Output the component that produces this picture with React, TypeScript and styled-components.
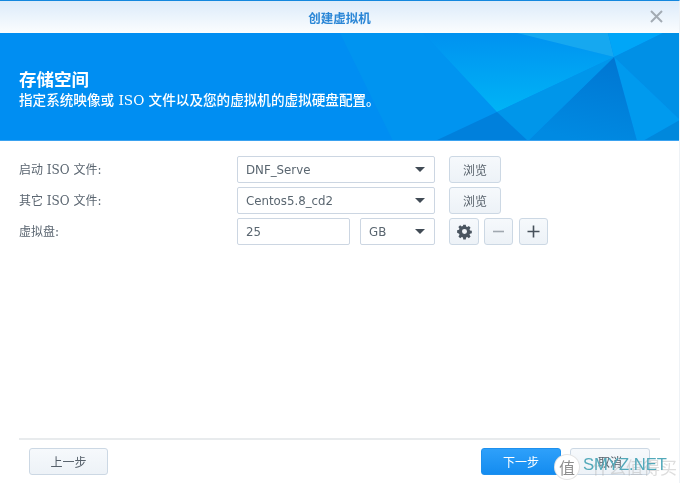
import React from "react";
import styled, { createGlobalStyle } from "styled-components";

const Global = createGlobalStyle`
  html, body { margin: 0; padding: 0; background: #fff; }
  body { font-family: "DejaVu Sans", "Noto Sans CJK SC", sans-serif; overflow: hidden; }
`;

const Dialog = styled.div`
  position: relative;
  width: 680px;
  height: 483px;
  box-sizing: border-box;
  border-top: 1px solid #1387de;
  border-right: 1px solid #eef2f6;
  background: #fff;
  display: flex;
  flex-direction: column;
  overflow: hidden;
  filter: blur(0.35px);
`;

const TitleBar = styled.div`
  height: 32px;
  flex: none;
  display: flex;
  align-items: center;
  justify-content: center;
  background: linear-gradient(#dcebfa, #fbfdfe);
  position: relative;
`;

const Title = styled.span`
  font: 700 12.5px "Noto Sans CJK SC", sans-serif;
  color: #2a86d6;
`;

const Close = styled.svg`
  position: absolute;
  right: 16px;
  top: 9px;
  width: 13px;
  height: 13px;
`;

const Banner = styled.header`
  position: relative;
  height: 108px;
  flex: none;
  box-sizing: border-box;
  border-bottom: 1px solid #3aa2f0;
  background: #008ef2;
  color: #fff;
  padding: 36px 19px 0;
  overflow: hidden;
`;

const BannerArt = styled.svg`
  position: absolute;
  left: 0;
  top: 0;
  width: 680px;
  height: 108px;
`;

const Heading = styled.h1`
  position: relative;
  margin: 0;
  font: 700 17.5px/20px "Noto Sans CJK SC", sans-serif;
`;

const Sub = styled.p`
  position: relative;
  margin: 3px 0 0;
  font: 500 13.6px/16px "DejaVu Serif", "Noto Sans CJK SC", serif;
  white-space: nowrap;
`;

const Form = styled.main`
  flex: 1;
  padding: 15px 19px 0;
  display: flex;
  flex-direction: column;
  gap: 4px;
`;

const Row = styled.div`
  display: flex;
  align-items: center;
  height: 27px;
`;

const Label = styled.label`
  width: 218px;
  flex: none;
  font: 12px/16px "DejaVu Serif", "Noto Sans CJK SC", serif;
  color: #5a6570;
  white-space: nowrap;
`;

const Field = styled.div<{ $w: number; $ml?: number }>`
  width: ${(p) => p.$w}px;
  margin-left: ${(p) => p.$ml ?? 0}px;
  height: 27px;
  box-sizing: border-box;
  flex: none;
  border: 1px solid #ccd6e2;
  border-radius: 2px;
  background: #fff;
  display: flex;
  align-items: center;
  justify-content: space-between;
  padding: 0 9px 0 8px;
  font-size: 11.8px;
  color: #5a6670;
`;

const Caret = styled.i`
  width: 0;
  height: 0;
  border-left: 5.5px solid transparent;
  border-right: 5.5px solid transparent;
  border-top: 5.5px solid #414b55;
`;

const Btn = styled.button<{ $w: number; $ml?: number; $primary?: boolean }>`
  width: ${(p) => p.$w}px;
  height: 27px;
  margin-left: ${(p) => p.$ml ?? 0}px;
  flex: none;
  box-sizing: border-box;
  padding: 0;
  border-radius: 3px;
  display: flex;
  align-items: center;
  justify-content: center;
  font: 12px "Noto Sans CJK SC", sans-serif;
  border: 1px solid ${(p) => (p.$primary ? "#1e90ee" : "#ccd8e4")};
  color: ${(p) => (p.$primary ? "#fff" : "#56606a")};
  background: ${(p) =>
    p.$primary ? "linear-gradient(#2ea0fa, #148cf0)" : "linear-gradient(#f6f9fc, #edf2f7)"};
`;

const Footer = styled.footer`
  flex: none;
  margin: 0 19px 8px 19px;
  padding: 8px 10px 0;
  border-top: 2px solid #e8ebed;
  height: 27px;
  display: flex;
  align-items: flex-start;
`;

const Spacer = styled.div`
  flex: 1;
`;

const Watermark = styled.div`
  position: absolute;
  left: 555px;
  top: 454px;
  width: 125px;
  height: 28px;
`;

const Badge = styled.span`
  position: absolute;
  left: 0;
  top: 0;
  width: 24px;
  height: 24px;
  border-radius: 50%;
  background: #fff;
  box-shadow: 0 0 0 1px #e4e4e4;
  color: #8e8e8e;
  font: 16px/24px "Noto Sans CJK SC", sans-serif;
  text-align: center;
`;

const Site = styled.span`
  position: absolute;
  left: 28px;
  top: 0;
  font: 16.6px/20px "Liberation Sans", sans-serif;
  color: #52a9ba;
`;

const Ghost = styled.span`
  position: absolute;
  left: 37px;
  top: 2px;
  font: 17px/20px "Noto Sans CJK SC", sans-serif;
  color: rgba(170, 170, 170, 0.4);
  white-space: nowrap;
`;

const art: [string, string][] = [
  ["340,0 393,108 436,108 497,79 423,0", "#0094f0"],
  ["423,0 517,0 614,24 497,79", "url(#glow)"],
  ["517,0 608,0 614,24", "#16a8f0"],
  ["608,0 663,0 614,24", "#00a6f8"],
  ["663,0 680,0 680,87 614,24", "#0090e6"],
  ["614,24 680,87 643,108 637,108", "#009aee"],
  ["614,24 637,108 528,108", "url(#deep)"],
  ["497,79 614,24 528,108", "#0096ea"],
  ["497,79 528,108 435,108", "#0080dc"],
  ["643,108 680,87 680,108", "#0088dc"],
];

export default function App() {
  return (
    <Dialog>
      <Global />
      <TitleBar>
        <Title>创建虚拟机</Title>
        <Close viewBox="0 0 13 13">
          <path d="M1 1 12 12M12 1 1 12" stroke="#a3abb3" strokeWidth="2" />
        </Close>
      </TitleBar>
      <Banner>
        <BannerArt viewBox="0 0 680 108">
          <defs>
            <linearGradient id="glow" x1="0.4" y1="0" x2="0.45" y2="1">
              <stop offset="0" stopColor="#0092f0" />
              <stop offset="1" stopColor="#00b4f6" />
            </linearGradient>
            <linearGradient id="deep" x1="0.8" y1="0" x2="0.5" y2="1">
              <stop offset="0" stopColor="#0076d2" />
              <stop offset="1" stopColor="#008ae2" />
            </linearGradient>
          </defs>
          {art.map(([points, fill]) => (
            <polygon key={points} points={points} fill={fill} />
          ))}
        </BannerArt>
        <Heading>存储空间</Heading>
        <Sub>指定系统映像或 ISO 文件以及您的虚拟机的虚拟硬盘配置。</Sub>
      </Banner>
      <Form>
        <Row>
          <Label>启动 ISO 文件:</Label>
          <Field $w={198}>DNF_Serve<Caret /></Field>
          <Btn $w={52} $ml={14}>浏览</Btn>
        </Row>
        <Row>
          <Label>其它 ISO 文件:</Label>
          <Field $w={198}>Centos5.8_cd2<Caret /></Field>
          <Btn $w={52} $ml={14}>浏览</Btn>
        </Row>
        <Row>
          <Label>虚拟盘:</Label>
          <Field $w={113}>25</Field>
          <Field $w={75} $ml={10}>GB<Caret /></Field>
          <Btn $w={30} $ml={14} aria-label="设置">
            <svg width="17" height="17" viewBox="0 0 18 18">
              <path
                fillRule="evenodd"
                fill="#4a5560"
                d="M7.5 1h3l.4 2.2 1.4.6 1.9-1.3 2.1 2.1-1.3 1.9.6 1.4 2.2.4v3l-2.2.4-.6 1.4 1.3 1.9-2.1 2.1-1.9-1.3-1.4.6-.4 2.2h-3l-.4-2.2-1.4-.6-1.9 1.3-2.1-2.1 1.3-1.9-.6-1.4L.1 10.5v-3l2.2-.4.6-1.4L1.6 3.8l2.1-2.1 1.9 1.3 1.4-.6zM9 6a3 3 0 1 0 0 6 3 3 0 0 0 0-6z"
                transform="translate(1.1 1) scale(.88)"
              />
            </svg>
          </Btn>
          <Btn $w={29} $ml={5} aria-label="删除">
            <svg width="13" height="13" viewBox="0 0 13 13">
              <path d="M1 6.5h11" stroke="#a0a8b0" strokeWidth="1.6" />
            </svg>
          </Btn>
          <Btn $w={29} $ml={6} aria-label="添加">
            <svg width="13" height="13" viewBox="0 0 13 13">
              <path d="M.5 6.5h12M6.5.5v12" stroke="#46505a" strokeWidth="1.6" />
            </svg>
          </Btn>
        </Row>
      </Form>
      <Footer>
        <Btn $w={79}>上一步</Btn>
        <Spacer />
        <Btn $w={80} $primary>下一步</Btn>
        <Btn $w={80} $ml={9}>取消</Btn>
      </Footer>
      <Watermark>
        <Ghost>什么值得买</Ghost>
        <Badge>值</Badge>
        <Site>SMYZ.NET</Site>
      </Watermark>
    </Dialog>
  );
}
